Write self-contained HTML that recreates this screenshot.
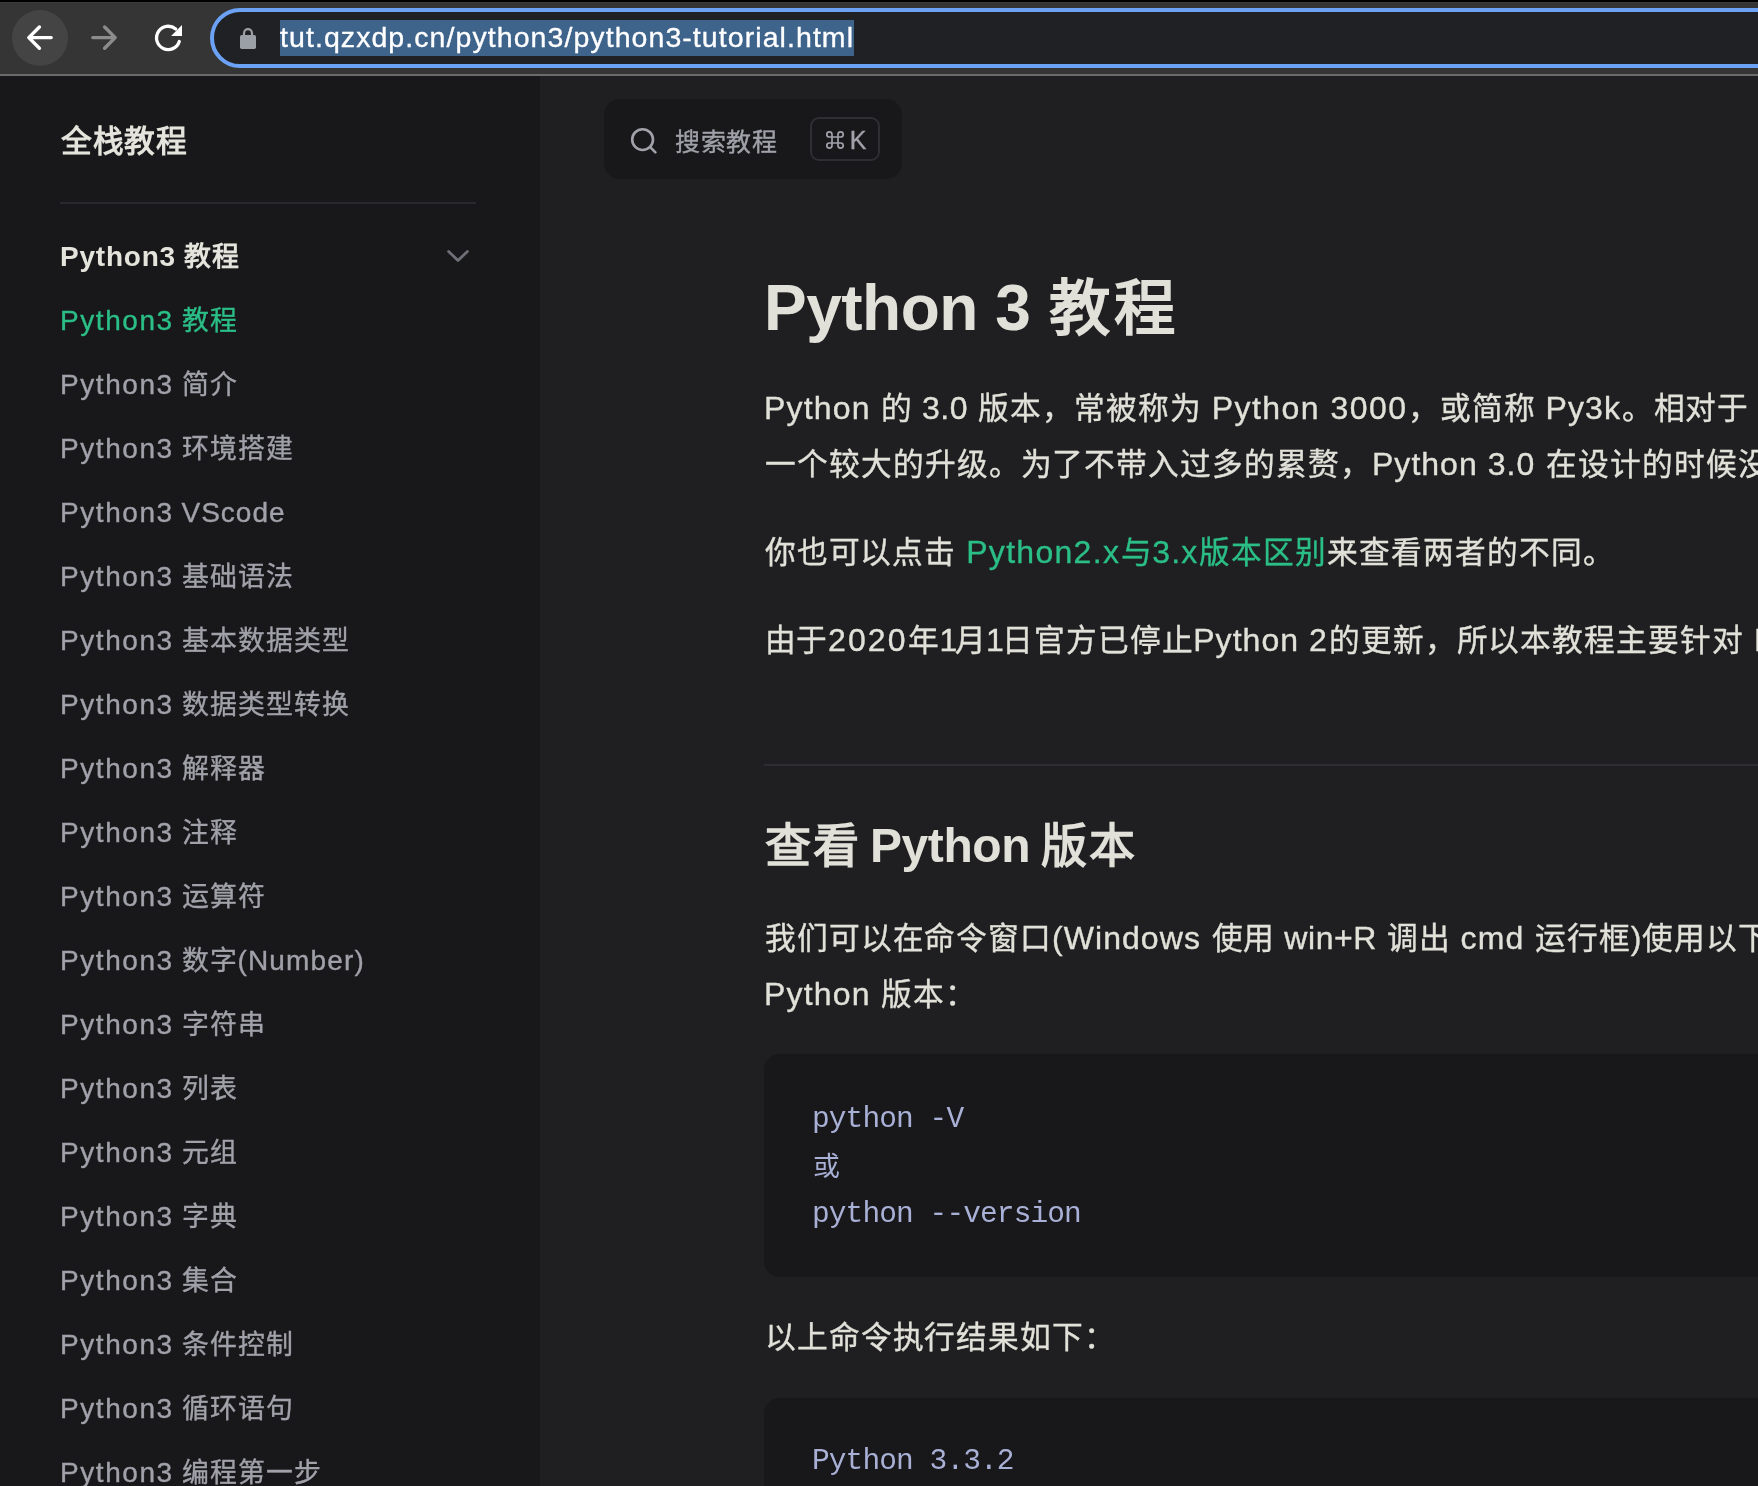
<!DOCTYPE html>
<html lang="zh-CN">
<head>
<meta charset="utf-8">
<title>Python 3 教程</title>
<style>
*{box-sizing:border-box;margin:0;padding:0}
html,body{width:1758px;height:1486px;overflow:hidden;background:#1f1f22}
body{position:relative;font-family:"Liberation Sans",sans-serif;color:#e1e1d9;-webkit-font-smoothing:antialiased;will-change:transform}
.abs{position:absolute}
.ln{position:absolute;white-space:nowrap;overflow:visible;-webkit-text-stroke:0.35px}
.c{display:inline-block;font-size:.96em;padding:0 .0208em;text-align:justify;text-align-last:justify;white-space:nowrap}
/* browser chrome */
#topstrip{left:0;top:0;width:1758px;height:2px;background:#000000}
#toolbar{left:0;top:2px;width:1758px;height:72px;background:#353535;border-top:1px solid #3b3b3b}
#tbline{left:0;top:74px;width:1758px;height:2px;background:#6a6a6a}
#backbtn{left:12px;top:10px;width:56px;height:56px;border-radius:50%;background:#444444}
#omni{left:210px;top:8px;width:1700px;height:60px;border-radius:30px;border:4px solid #6ba2f5;background:#202124}
#url{left:280px;top:20px;height:36px;line-height:35px;background:#3f648c;font-size:28.5px;color:#ffffff;letter-spacing:1.07px}
/* page */
#sidebar{left:0;top:76px;width:540px;height:1410px;background:#18181b}
#main{left:540px;top:76px;width:1218px;height:1410px;background:#1f1f22}
#brand{-webkit-text-stroke:0;left:60px;top:116.5px;height:48px;line-height:48px;font-size:32px;font-weight:bold;color:#e4e4dc}
#sbhr{left:60px;top:202px;width:416px;height:2px;background:#29292d}
.nav{left:60px;height:40px;line-height:40px;font-size:28px;color:#a1a1aa}
.nav .l{letter-spacing:1.57px}
.nav.head{-webkit-text-stroke:0;font-weight:bold;color:#e4e4dc}
.nav.head .l{letter-spacing:0.78px}
.nav.on{color:#2bbf87}
/* search */
#search{left:604px;top:99px;width:298px;height:80px;border-radius:16px;background:#18181b}
#stext{left:674px;top:121.5px;height:40px;line-height:40px;font-size:26px;color:#a1a1aa}
#kbd{left:810px;top:117px;width:70px;height:44px;border-radius:9px;border:2px solid #2e2e33}
#kk{left:849.8px;top:119.6px;height:40px;line-height:40px;font-size:25px;color:#a1a1aa}
/* article */
#h1{-webkit-text-stroke:0;left:764px;top:270px;height:76px;line-height:76px;font-size:64px;font-weight:bold;color:#e1e1d9;letter-spacing:-0.5px}
.p{left:764px;height:56px;line-height:56px;font-size:32px;color:#e1e1d9}
.p a{color:#2bbf87;text-decoration:none}
#hr{left:764px;top:764px;width:1000px;height:2px;background:#2e2e32}
#h2{-webkit-text-stroke:0;left:764px;top:816px;height:60px;line-height:60px;font-size:48px;font-weight:bold;color:#e1e1d9}
.code{left:764px;width:1100px;border-radius:16px;background:#18181b}
.cl{left:812px;height:48px;line-height:48px;font-size:29.5px;letter-spacing:-0.9px;font-family:"Liberation Mono",monospace;color:#a9b0d6;-webkit-text-stroke:0}
</style>
</head>
<body>
<!-- ===== browser toolbar ===== -->
<div class="abs" id="topstrip"></div>
<div class="abs" id="toolbar"></div>
<div class="abs" id="tbline"></div>
<div class="abs" id="backbtn"></div>
<svg class="abs" style="left:0;top:0" width="210" height="76" viewBox="0 0 210 76" fill="none">
  <!-- back -->
  <path d="M51.2 37.6H29.5M39.4 27L28.8 37.6L39.4 48.2" stroke="#ffffff" stroke-width="3.4" stroke-linecap="round" stroke-linejoin="round"/>
  <!-- forward -->
  <path d="M92.8 37.6H114.5M104.6 27L115.2 37.6L104.6 48.2" stroke="#8c8c8c" stroke-width="3.4" stroke-linecap="round" stroke-linejoin="round"/>
  <!-- reload -->
  <path d="M179.3 41.5A11.65 11.65 0 1 1 175.7 29" stroke="#ffffff" stroke-width="3.3" stroke-linecap="round"/>
  <path d="M182 25v10.9h-10.9z" fill="#ffffff"/>
</svg>
<div class="abs" id="omni"></div>
<svg class="abs" style="left:238px;top:26px" width="20" height="26" viewBox="0 0 20 26">
  <rect x="2" y="9.1" width="16" height="13.9" rx="1.7" fill="#9aa0a6"/>
  <path d="M6 9.6V7.2a4 4 0 0 1 8 0V9.6" fill="none" stroke="#9aa0a6" stroke-width="2.2"/>
</svg>
<div class="ln" id="url">tut.qzxdp.cn/python3/python3-tutorial.html</div>

<!-- ===== page ===== -->
<div class="abs" id="sidebar"></div>
<div class="abs" id="main"></div>

<!-- sidebar content -->
<div class="ln" id="brand"><span class="c" style="width:4.1667em">全栈教程</span></div>
<div class="abs" id="sbhr"></div>
<div class="ln nav head" id="nav0" style="top:237px"><span class="l">Python3</span> <span class="c" style="width:2.0833em">教程</span></div>
<svg class="abs" style="left:444px;top:244px" width="28" height="24" viewBox="0 0 28 24" fill="none"><path d="M4.6 7.4L14 16.6L23.4 7.4" stroke="#6f7077" stroke-width="2.8" stroke-linecap="round" stroke-linejoin="round"/></svg>
<div class="ln nav on" id="nav1" style="top:301px"><span class="l">Python3</span> <span class="c" style="width:2.0833em">教程</span></div>
<div class="ln nav" id="nav2" style="top:365px"><span class="l">Python3</span> <span class="c" style="width:2.0833em">简介</span></div>
<div class="ln nav" id="nav3" style="top:429px"><span class="l">Python3</span> <span class="c" style="width:4.1667em">环境搭建</span></div>
<div class="ln nav" id="nav4" style="top:493px"><span class="l">Python3</span> <span style="letter-spacing:1px">VScode</span></div>
<div class="ln nav" id="nav5" style="top:557px"><span class="l">Python3</span> <span class="c" style="width:4.1667em">基础语法</span></div>
<div class="ln nav" id="nav6" style="top:621px"><span class="l">Python3</span> <span class="c" style="width:6.2500em">基本数据类型</span></div>
<div class="ln nav" id="nav7" style="top:685px"><span class="l">Python3</span> <span class="c" style="width:6.2500em">数据类型转换</span></div>
<div class="ln nav" id="nav8" style="top:749px"><span class="l">Python3</span> <span class="c" style="width:3.1250em">解释器</span></div>
<div class="ln nav" id="nav9" style="top:813px"><span class="l">Python3</span> <span class="c" style="width:2.0833em">注释</span></div>
<div class="ln nav" id="nav10" style="top:877px"><span class="l">Python3</span> <span class="c" style="width:3.1250em">运算符</span></div>
<div class="ln nav" id="nav11" style="top:941px"><span class="l">Python3</span> <span class="c" style="width:2.0833em">数字</span><span style="letter-spacing:1.15px">(Number)</span></div>
<div class="ln nav" id="nav12" style="top:1005px"><span class="l">Python3</span> <span class="c" style="width:3.1250em">字符串</span></div>
<div class="ln nav" id="nav13" style="top:1069px"><span class="l">Python3</span> <span class="c" style="width:2.0833em">列表</span></div>
<div class="ln nav" id="nav14" style="top:1133px"><span class="l">Python3</span> <span class="c" style="width:2.0833em">元组</span></div>
<div class="ln nav" id="nav15" style="top:1197px"><span class="l">Python3</span> <span class="c" style="width:2.0833em">字典</span></div>
<div class="ln nav" id="nav16" style="top:1261px"><span class="l">Python3</span> <span class="c" style="width:2.0833em">集合</span></div>
<div class="ln nav" id="nav17" style="top:1325px"><span class="l">Python3</span> <span class="c" style="width:4.1667em">条件控制</span></div>
<div class="ln nav" id="nav18" style="top:1389px"><span class="l">Python3</span> <span class="c" style="width:4.1667em">循环语句</span></div>
<div class="ln nav" id="nav19" style="top:1453px"><span class="l">Python3</span> <span class="c" style="width:5.2083em">编程第一步</span></div>

<!-- search -->
<div class="abs" id="search"></div>
<svg class="abs" style="left:626px;top:124px" width="36" height="34" viewBox="0 0 36 34" fill="none"><circle cx="16.6" cy="15.6" r="10.4" stroke="#a1a1aa" stroke-width="2.6"/><path d="M24.2 23.2L29.4 28.4" stroke="#a1a1aa" stroke-width="2.6" stroke-linecap="round"/></svg>
<div class="ln" id="stext"><span class="c" style="width:4.1667em">搜索教程</span></div>
<div class="abs" id="kbd"></div>
<svg class="abs" style="left:825px;top:130px" width="20" height="20" viewBox="-10 -10 20 20" fill="none"><path d="M-3-3V-5.6a2.6 2.6 0 1 0-2.6 2.6H5.6a2.6 2.6 0 1 0-2.6-2.6V5.6a2.6 2.6 0 1 0 2.6-2.6H-5.6a2.6 2.6 0 1 0 2.6 2.6z" stroke="#a1a1aa" stroke-width="1.7"/></svg>
<div class="ln" id="kk">K</div>
<!-- article -->
<div class="ln" id="h1">Python 3 <span class="c" style="width:2.0833em">教程</span></div>
<div class="ln p" id="p1a" style="top:380px"><span style="letter-spacing:1.17px">Python </span><span class="c" style="width:1.0417em">的</span><span style="letter-spacing:0.46px"> 3.0 </span><span class="c" style="width:7.2917em">版本，常被称为</span><span style="letter-spacing:1.47px"> Python 3000</span><span class="c" style="width:4.1667em">，或简称</span><span style="letter-spacing:1.08px"> Py3k</span><span class="c" style="width:4.1667em">。相对于</span><span style="letter-spacing:1.17px"> Python </span><span class="c" style="width:8.3333em">的早期版本，这是</span></div>
<div class="ln p" id="p1b" style="top:436px"><span class="c" style="width:19.7917em">一个较大的升级。为了不带入过多的累赘，</span><span style="letter-spacing:1.02px">Python 3.0 </span><span class="c" style="width:15.6250em">在设计的时候没有考虑向下兼容。</span></div>
<div class="ln p" id="p2" style="top:524px"><span class="c" style="width:6.2500em">你也可以点击</span><a><span style="letter-spacing:1.3px"> Python2.x</span><span class="c" style="width:1.0417em">与</span><span style="letter-spacing:1.23px">3.x</span><span class="c" style="width:4.1667em">版本区别</span></a><span class="c" style="width:9.3750em">来查看两者的不同。</span></div>
<div class="ln p" id="p3" style="top:612px"><span class="c" style="width:2.0833em">由于</span><span style="letter-spacing:2.1px">2020</span><span class="c" style="width:1.0417em">年</span><span style="letter-spacing:-3.5px">1</span><span class="c" style="width:1.0417em">月</span><span style="letter-spacing:-2.5px">1</span><span class="c" style="width:6.2500em">日官方已停止</span><span style="letter-spacing:1.06px">Python 2</span><span class="c" style="width:13.5417em">的更新，所以本教程主要针对</span><span style="letter-spacing:1.1px"> Python 3.x </span><span class="c" style="width:6.2500em">版本的学习。</span></div>
<div class="abs" id="hr"></div>
<div class="ln" id="h2"><span class="c" style="width:2.0833em">查看</span><span style="letter-spacing:-0.4px;word-spacing:-3px"> Python </span><span class="c" style="width:2.0833em">版本</span></div>
<div class="ln p" id="p4a" style="top:910px"><span class="c" style="width:9.3750em">我们可以在命令窗口</span><span style="letter-spacing:1.06px">(Windows </span><span class="c" style="width:2.0833em">使用</span><span style="letter-spacing:0.57px"> win+R </span><span class="c" style="width:2.0833em">调出</span><span style="letter-spacing:1.2px"> cmd </span><span class="c" style="width:3.1250em">运行框</span>)<span class="c" style="width:13.5417em">使用以下命令查看我们使用的</span></div>
<div class="ln p" id="p4b" style="top:966px"><span style="letter-spacing:1.17px">Python </span><span class="c" style="width:3.1250em">版本：</span></div>
<div class="abs code" id="code1" style="top:1054px;height:223px"></div>
<div class="ln cl" id="c1" style="top:1094.7px">python -V</div>
<div class="ln cl" id="c2" style="top:1144.5px;font-size:28px;letter-spacing:0"><span class="c" style="width:1.0417em">或</span></div>
<div class="ln cl" id="c3" style="top:1189.6px">python --version</div>
<div class="ln p" id="p5" style="top:1309px"><span class="c" style="width:11.4583em">以上命令执行结果如下：</span></div>
<div class="abs code" id="code2" style="top:1397.5px;height:200px"></div>
<div class="ln cl" id="c4" style="top:1437.2px">Python 3.3.2</div>

</body>
</html>
